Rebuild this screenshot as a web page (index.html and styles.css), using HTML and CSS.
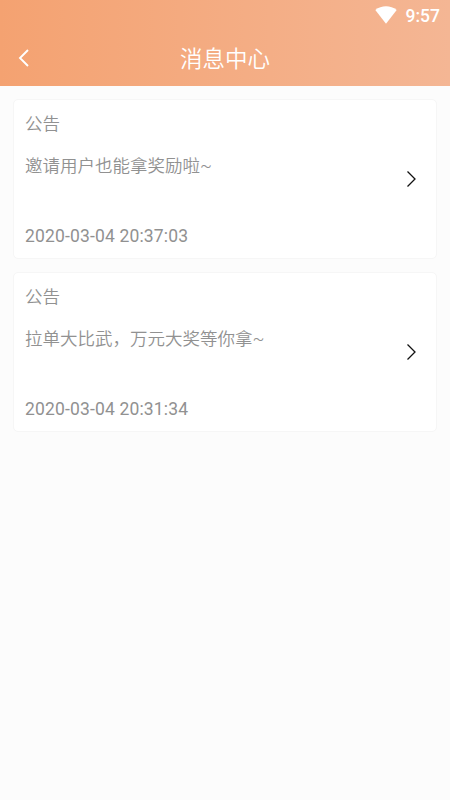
FILE: index.html
```html
<!DOCTYPE html>
<html lang="zh-CN">
<head>
<meta charset="utf-8">
<title>消息中心</title>
<link rel="stylesheet" href="styles.css">
</head>
<body>
<header class="header">
  <div class="status">
    <svg class="wifi" width="22" height="18" viewBox="0 0 22 18"><path d="M0.3 3.9C6.5-1 15.5-1 21.7 3.9L11 17.8Z" fill="#fff"/></svg>
    <span class="clock">9:57</span>
  </div>
  <div class="nav">
    <svg class="back" width="12" height="20" viewBox="0 0 12 20"><path d="M10 2L2 10L10 18" fill="none" stroke="#fff" stroke-width="1.9"/></svg>
    <h1 class="title">消息中心</h1>
  </div>
</header>
<main class="list">
  <article class="card">
    <div class="content">
      <div class="label">公告</div>
      <div class="message">邀请用户也能拿奖励啦~</div>
      <time class="date">2020-03-04 20:37:03</time>
    </div>
    <svg class="arrow" width="11" height="18" viewBox="0 0 11 18"><path d="M1.5 1.5L9 9L1.5 16.5" fill="none" stroke="#111" stroke-width="1.3"/></svg>
  </article>
  <article class="card">
    <div class="content">
      <div class="label">公告</div>
      <div class="message">拉单大比武，万元大奖等你拿~</div>
      <time class="date">2020-03-04 20:31:34</time>
    </div>
    <svg class="arrow" width="11" height="18" viewBox="0 0 11 18"><path d="M1.5 1.5L9 9L1.5 16.5" fill="none" stroke="#111" stroke-width="1.3"/></svg>
  </article>
</main>
</body>
</html>
```
FILE: styles.css
```css
* { box-sizing: border-box; }
body {
  margin: 0;
  min-height: 800px;
  background: #fcfcfc;
  font-family: Roboto, "Noto Sans CJK SC", sans-serif;
}
.header {
  height: 86px;
  background: linear-gradient(90deg, #f4a271, #f4b694);
  color: #fff;
}
.status {
  height: 30px;
  padding-right: 10px;
  display: flex;
  justify-content: flex-end;
  align-items: center;
  gap: 9px;
}
.clock {
  font-size: 17.5px;
  font-weight: 500;
  line-height: 30px;
  padding-top: 2px;
}
.nav {
  height: 56px;
  display: grid;
  grid-template-columns: 50px 1fr 50px;
  align-items: center;
}
.back { margin-left: 18px; }
.title {
  margin: 0;
  padding-top: 1px;
  font-size: 22.5px;
  line-height: 32px;
  font-weight: 350;
  text-align: center;
}
.list {
  padding: 13px 13px 0;
  display: flex;
  flex-direction: column;
  gap: 13px;
}
.card {
  height: 160px;
  padding: 0 19px 0 11px;
  display: flex;
  align-items: center;
  justify-content: space-between;
  background: #fff;
  border: 1px solid #f6f6f6;
  border-radius: 5px;
}
.content {
  height: 100%;
  display: flex;
  flex-direction: column;
  padding: 11px 0 9px;
  color: #919191;
  font-size: 17.5px;
  line-height: 26px;
}
.label,
.message { font-weight: 350; }
.message { margin-top: 16px; }
.date {
  margin-top: auto;
  letter-spacing: 0.16px;
}
```
